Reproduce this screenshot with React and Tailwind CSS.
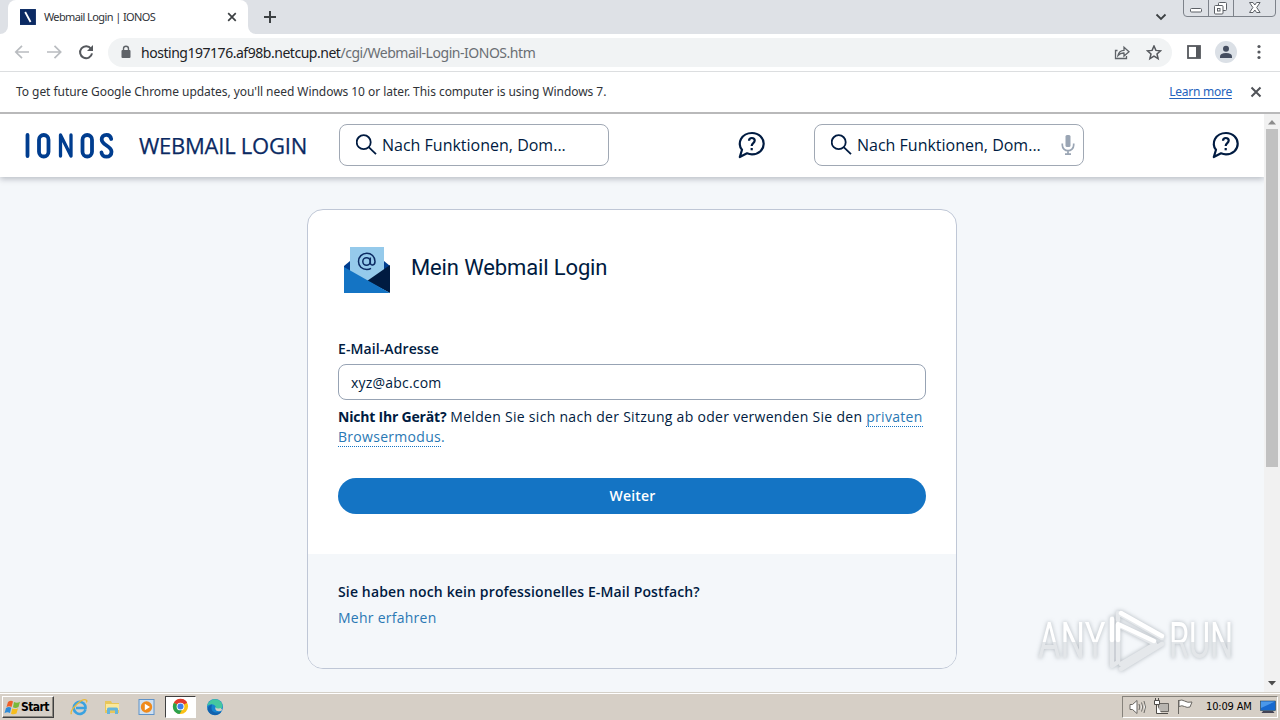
import React from 'react';

const ui = "font-['DejaVu_Sans_Condensed','DejaVu_Sans',sans-serif]";

function TabStrip() {
  return (
    <div className="relative flex h-[34px] shrink-0 bg-[#dee1e6]">
      <div className="flex w-2 items-end bg-white">
        <div className="h-full w-full rounded-br-lg bg-[#dee1e6]" />
      </div>
      <div className="flex w-[240px] items-center rounded-t-lg bg-white pl-3 pr-[10px]">
        <svg width="16" height="16" viewBox="0 0 16 16">
          <rect width="16" height="16" fill="#0b2a63" />
          <path d="M5.2 3L10.6 13" stroke="#fff" strokeWidth="1.8" />
        </svg>
        <span className="ml-[8px] w-[183px] whitespace-nowrap font-['Noto_Sans',sans-serif] text-[11px] leading-4 tracking-[-0.6px] text-[#303338]">Webmail Login | IONOS</span>
        <svg width="12" height="12" viewBox="0 0 12 12" stroke="#3c4043" strokeWidth="1.7"><path d="M2.2 2.2l7.6 7.6M9.8 2.2L2.2 9.8" /></svg>
      </div>
      <div className="w-2 bg-white"><div className="h-full rounded-bl-lg bg-[#dee1e6]" /></div>
      <svg className="ml-[7px] mt-[10px]" width="14" height="14" viewBox="0 0 14 14" stroke="#3c4043" strokeWidth="2"><path d="M7 1v12M1 7h12" /></svg>
      <svg className="ml-auto mr-[16px] mt-[12px]" width="12" height="10" viewBox="0 0 12 10" fill="none" stroke="#3c4043" strokeWidth="1.8"><path d="M1.500 2.500L6 7l4.500-4.500" /></svg>
      <svg className="mr-[4px]" width="93" height="17" viewBox="0 0 93 17" fill="none" stroke="#7d828a">
        <path d="M.5 0v13q0 3.500 3.500 3.500h85q3.500 0 3.500-3.500V0M25.500 0v16.500M50.500 0v16.500" />
        <g stroke="#5c6066" fill="#fff">
          <rect x="7.500" y="8.500" width="11" height="3.500" rx="1" />
          <rect x="35.500" y="2.500" width="8" height="8" rx="1" />
          <rect x="31.500" y="5.500" width="8.500" height="8.500" rx="1" />
          <rect x="34.500" y="8.500" width="2.500" height="2.500" />
          <path d="M66.500 2.500h3.500l1.800 2.500 1.800-2.500h3.500l-3.400 5 3.400 5h-3.500L71.800 10 70 12.500h-3.500l3.400-5z" />
        </g>
      </svg>
    </div>
  );
}

function Toolbar() {
  return (
    <div className="flex h-[38px] shrink-0 items-center border-b border-[#dcdee0] bg-white pl-[14px] pr-[14px]">
      <svg width="82" height="18" viewBox="0 0 82 18" fill="none" strokeWidth="1.700">
        <path d="M15 8H2M8 1.800L1.800 8 8 14.200M33 8h13.500M40.500 1.800L46.700 8l-6.200 6.200" stroke="#b9bcc0" />
        <path d="M77 4.800A6 6 0 1 0 78 9.300" stroke="#55585d" strokeWidth="2" />
        <path d="M79 1v6h-6z" fill="#55585d" />
      </svg>
      <div className="ml-3 flex h-[29px] w-[1064px] items-center rounded-full bg-[#f1f3f4] pl-3 pr-[10px]">
        <svg className="-mt-px" width="12" height="14" viewBox="0 0 12 14"><rect x="1.500" y="5" width="9" height="8" rx="1" fill="#5f6368" /><path d="M3.500 6V3.700a2.500 2.500 0 0 1 5 0V6" fill="none" stroke="#5f6368" strokeWidth="1.400" /></svg>
        <span className="ml-[9px] whitespace-nowrap font-['Noto_Sans',sans-serif] text-[14px] leading-5 tracking-[-0.47px] text-[#202124]">hosting197176.af98b.netcup.net<span className="text-[#6a6e73]">/cgi/Webmail-Login-IONOS.htm</span></span>
        <svg className="ml-auto" width="16" height="16" viewBox="0 0 16 16" fill="none" stroke="#5f6368" strokeWidth="1.300"><path d="M3.500 5.500h-2v8h11V11M4 10.500Q5 5.500 10 5.300V2.200l5 4.600-5 4.200V8Q6.500 7.800 4 10.500z" /></svg>
        <svg className="ml-4" width="16" height="16" viewBox="0 0 16 16" fill="none" stroke="#55585d" strokeWidth="1.500"><path d="M8 1l1.900 4.400 4.600.4L11 9l1.100 4.700L8 11.200l-4.100 2.500L5 9 1.500 5.800l4.600-.4z" /></svg>
      </div>
      <svg className="-mt-0.5 ml-[14px]" width="16" height="16" viewBox="0 0 16 16"><rect x="2" y="2" width="12" height="12" fill="none" stroke="#55585d" strokeWidth="1.800" /><path d="M10 2h4v12h-4z" fill="#55585d" /></svg>
      <svg className="-mt-0.5 ml-[13px]" width="22" height="22" viewBox="0 0 22 22"><circle cx="11" cy="11" r="11" fill="#dbe0e6" /><circle cx="11" cy="7.700" r="3" fill="#454e60" /><path d="M5 17v-1.500q0-3.500 6-3.500t6 3.500V17z" fill="#454e60" /></svg>
      <svg className="-mt-px ml-[20px]" width="4" height="16" fill="#55585d"><circle cx="2" cy="2.500" r="1.600" /><circle cx="2" cy="8" r="1.600" /><circle cx="2" cy="13.500" r="1.600" /></svg>
    </div>
  );
}

function UpdateBar() {
  return (
    <div className="flex h-[42px] shrink-0 items-center border-b-2 border-[#b9b9ba] bg-white pb-px pl-4 pr-[18px] font-['Noto_Sans',sans-serif] text-[12px] text-[#303338]">
      <span className="whitespace-nowrap tracking-[-0.05px]">To get future Google Chrome updates, you'll need Windows 10 or later. This computer is using Windows 7.</span>
      <a className="ml-auto tracking-[-0.25px] text-[#2463bd] underline underline-offset-2">Learn more</a>
      <svg className="ml-[18px]" width="12" height="12" viewBox="0 0 12 12" stroke="#505358" strokeWidth="2"><path d="M1.500 1.500l9 9M10.500 1.500l-9 9" /></svg>
    </div>
  );
}

function SearchField({ mic }) {
  return (
    <div className="flex h-[42px] w-[270px] items-center rounded-[8px] border border-[#a0a8b4] bg-white pl-4 pr-2">
      <svg width="22" height="22" viewBox="0 0 22 22" fill="none" stroke="#001b41" strokeWidth="1.800"><circle cx="7.700" cy="8.200" r="7" /><path d="M12.700 13.200l7.300 7" /></svg>
      <span className="ml-1 whitespace-nowrap text-[16px]">Nach Funktionen, Dom...</span>
      {mic && (
        <svg className="ml-auto" width="14" height="22" viewBox="0 0 14 22" fill="none" stroke="#9aa5b4" strokeWidth="1.700"><rect x="4.500" y="1" width="5" height="12" rx="1.500" fill="#9aa5b4" stroke="none" /><path d="M1.300 9.500v1.500a5.700 5.700 0 0 0 11.400 0V9.500M7 16.500V20M4 20.200h6" /></svg>
      )}
    </div>
  );
}

function HelpBubble() {
  return (
    <svg width="28" height="28" viewBox="0 0 28 28" fill="none" stroke="#001b41" strokeWidth="2.200">
      <path d="M1.800 26l2.200-7.200C1.300 16 1.200 11.200 3 8 5 4.500 9 2 14 2c7 0 11.700 5 11.700 10.800S21 23.300 14 23.300c-2 0-3.300-.3-5-1z" strokeLinejoin="round" />
      <path d="M11 9.700C11.100 7.800 12.300 7 13.800 7c1.700 0 2.900 1 2.900 2.600 0 2.600-3 2.400-3 5.400" />
      <path d="M13.700 17v2.300" />
    </svg>
  );
}

function SiteHeader() {
  return (
    <div className="relative z-10 flex h-[63px] shrink-0 items-center bg-white pb-px pl-[24px] text-[#001b41] shadow-[0_2px_6px_rgba(0,10,30,0.25)]">
      <svg className="mt-0.5" width="90" height="28" viewBox="0 0 90 28" fill="none" stroke="#003d8f" strokeWidth="3.800" strokeLinecap="round">
        <path d="M3.500 3v21" />
        <rect x="15" y="3" width="9.500" height="21.500" rx="4.750" />
        <path d="M36.500 24V3l10.500 21V3" strokeWidth="3.300" strokeLinejoin="round" />
        <rect x="58.500" y="3" width="9.500" height="21.500" rx="4.750" />
        <path d="M87.200 7c-.5-3-2.500-4.200-4.700-4.200-3 0-4.800 1.900-4.800 4.700 0 5.600 9.800 6.500 9.800 12.200 0 3-2 5-5 5-2.800 0-4.600-1.500-5-4.200" />
      </svg>
      <span className="ml-[25px] w-[200px] whitespace-nowrap text-[22px] tracking-[-0.24px] text-[#0b2a63] [-webkit-text-stroke:0.25px_#0b2a63]">WEBMAIL LOGIN</span>
      <SearchField />
      <div className="ml-[129px] mr-[48px]"><HelpBubble /></div>
      <SearchField mic />
      <div className="ml-[128px]"><HelpBubble /></div>
    </div>
  );
}

function LoginCard() {
  return (
    <div className="mx-auto mt-[32px] h-[460px] w-[650px] shrink-0 overflow-hidden rounded-[16px] border border-[#bfc7d6] bg-white text-[14px] leading-5 text-[#001b41]">
      <div className="h-[344px] px-[30px] pt-[36px]">
        <div className="flex h-[48px] items-center pl-[6px]">
          <svg width="46" height="46" viewBox="0 0 46 46">
            <path d="M0 19L6 14h34l6 5v10L23 36 0 25z" fill="#003d8f" />
            <path d="M6 0h34v26L23 35 6 25z" fill="#95caeb" />
            <path d="M46 18v28L23 34z" fill="#001b41" />
            <path d="M0 20l46 26H0z" fill="#1474c4" />
            <g fill="none" stroke="#0b2a63" strokeWidth="1.500"><circle cx="22.500" cy="14.500" r="3.700" /><path d="M26.300 10.500v5.200c0 3.400 4.700 3 4.700-1.200 0-5-3.700-8.200-8.200-8.200-4.800 0-8.300 3.500-8.300 8.200s3.500 8 8.300 8c1.700 0 3.100-.4 4.200-1.100" /></g>
          </svg>
          <h1 className="-mt-1 ml-[21px] whitespace-nowrap font-['Roboto',sans-serif] text-[22px] leading-7 tracking-[-0.13px]">Mein Webmail Login</h1>
        </div>
        <label className="mt-[45px] block font-semibold tracking-[0.1px]">E-Mail-Adresse</label>
        <div className="mt-[5px] flex h-[36px] items-center rounded-[8px] border border-[#97a3b4] px-3 pt-0.5 tracking-[0.2px]">xyz@abc.com</div>
        <p className="mt-[7px] whitespace-nowrap tracking-[0.29px]">
          <b className="font-bold tracking-[-0.2px]">Nicht Ihr Gerät?</b> Melden Sie sich nach der Sitzung ab oder verwenden Sie den <a className="border-b border-dotted border-[#1474c4] text-[#2a78b4]">privaten</a><br />
          <a className="border-b border-dotted border-[#1474c4] text-[#2a78b4]">Browsermodus</a><span className="text-[#2a78b4]">.</span>
        </p>
        <div className="mt-[31px] flex h-[36px] items-center justify-center rounded-full bg-[#1474c4] pl-px font-semibold tracking-[0.15px] text-white">Weiter</div>
      </div>
      <div className="h-[114px] bg-[#f4f7fa] px-[30px] pt-[28px]">
        <p className="whitespace-nowrap font-semibold tracking-[0.14px]">Sie haben noch kein professionelles E-Mail Postfach?</p>
        <a className="mt-[6px] block tracking-[0.25px] text-[#2a78b4]">Mehr erfahren</a>
      </div>
    </div>
  );
}

function ScrollBar() {
  return (
    <div className="flex w-4 shrink-0 flex-col items-center bg-[#f1f1f1]">
      <svg width="16" height="15" viewBox="0 0 16 15"><path d="M4 10.500l4-4.500 4 4.500z" fill="#8b8b8b" /></svg>
      <div className="h-[338px] w-3 bg-[#c1c1c1]" />
      <svg className="mt-auto" width="16" height="16" viewBox="0 0 16 16"><path d="M4 5l4 4.500L12 5z" fill="#4c4c4c" /></svg>
    </div>
  );
}

function Watermark() {
  return (
    <div className="absolute left-[1038px] top-[608px] z-20 flex h-[66px] w-[198px] items-center font-['Roboto',sans-serif] text-[50px] leading-none drop-shadow-[0_0_2px_rgba(110,120,130,0.5)]">
      <span className="w-[69px]"><span className="block w-max origin-left scale-x-[0.69] bg-linear-to-b from-white from-52% to-[#e3e6e9] to-52% bg-clip-text text-transparent">ANY</span></span>
      <svg width="62" height="66" viewBox="0 0 62 66" fill="none" stroke="#f4f6f8" strokeWidth="4.500" strokeLinejoin="round" strokeLinecap="round">
        <path d="M5 10v48l6-4V17l37 19M11 5l44 25M11 5v7M48 36L14 56M55 36L14 61" stroke="#e5e8eb" />
        <path d="M5 32V11M11 32V16l36 17M14 5l41 23" stroke="#fff" />
      </svg>
      <span className="w-[66px]"><span className="block w-max origin-left scale-x-[0.65] bg-linear-to-b from-white from-52% to-[#e3e6e9] to-52% bg-clip-text text-transparent">RUN</span></span>
    </div>
  );
}

function Taskbar() {
  return (
    <div className={`flex h-[28px] shrink-0 items-center border-t border-[#d4d0c8] bg-[#d6cfc6] shadow-[inset_0_1px_0_#fff] ${ui}`}>
      <div className="ml-[2px] mt-px flex h-[22px] w-[52px] items-center border border-b-[#404040] border-l-white border-r-[#404040] border-t-white pl-[1px] shadow-[inset_-1px_-1px_0_#8c8880]">
        <svg className="shrink-0" width="17" height="17" viewBox="0 0 17 17">
          <path d="M4 3q3-2 5-.5L7.500 8q-2.500-1.500-5 0z" fill="#ef5f28" /><path d="M10 3q3 1.500 6-.2L14.500 8q-3 1.700-5.500.3z" fill="#79b93b" /><path d="M2 9q3-1.800 5.200-.2L6 14q-3-1.500-5.500.3z" fill="#2e8bd8" /><path d="M8.300 9.400q3 1.400 5.700-.2l-1.500 5.300q-3 1.500-5.500.2z" fill="#f6bd1d" />
        </svg>
        <span className="text-[12px] font-bold tracking-[-0.55px] text-black">Start</span>
      </div>
      <svg className="ml-[16px]" width="18" height="18" viewBox="0 0 18 18" fill="none"><path d="M15.500 11.500A6 6 0 1 1 15.200 7.500q.4 1.500.3 2.500H6" stroke="#3aa2e0" strokeWidth="2.600" /><path d="M1.500 16.200C-1 13 12-1 16.500 2.200q.8.800-.2 2.300" stroke="#e9b93a" strokeWidth="1.300" /></svg>
      <svg className="ml-[16px]" width="17" height="18" viewBox="0 0 17 18"><path d="M1 3h6l1 2h7v10H1z" fill="#e8c65a" /><path d="M2 6h13v6H2z" fill="#fbe89a" /><path d="M3 16v-5q0-1.500 1.500-1.500h8q1.500 0 1.500 1.500v5h-3v-3.500H6V16z" fill="#65b5dc" /></svg>
      <svg className="ml-[17px]" width="17" height="18" viewBox="0 0 17 18"><rect x="1" y="1.500" width="15" height="15" fill="#cfe0f1" stroke="#5f93c9" /><circle cx="8.500" cy="9" r="5.700" fill="#ef8a1c" /><path d="M6.800 5.800v6.400L12 9z" fill="#fff" /></svg>
      <div className="ml-[10px] flex h-[22px] w-[31px] items-center justify-center border border-b-white border-l-[#404040] border-r-white border-t-[#404040] bg-white">
        <svg width="17" height="17" viewBox="0 0 18 18"><circle cx="9" cy="9" r="8" fill="#fbc116" /><path d="M9 9L2 5a8 8 0 0 1 14 0z" fill="#e33b2e" /><path d="M9 9L2 5a8 8 0 0 0 6 12l3.500-6z" fill="#2da14c" /><path d="M9 1a8 8 0 0 1 7 4H9z" fill="#e33b2e" /><circle cx="9" cy="9" r="4.100" fill="#fff" /><circle cx="9" cy="9" r="3.200" fill="#3f7fea" /></svg>
      </div>
      <svg className="ml-[10px]" width="18" height="18" viewBox="0 0 18 18"><circle cx="9" cy="9" r="8" fill="#1683d0" /><path d="M1.200 8C2.500 2 8 0 12.500 2c4 2 5.500 7.500 2 9.500-2 1-4.500.5-4.500-1 0-2-1-4-4-4.300Q3 6 1.200 8z" fill="#45c7a0" /><path d="M5.500 9C5 14 9.500 16 15.500 13.500 12 19 4 18 1.800 12.500 1 10 3 7 6 6.500z" fill="#1262ad" /><path d="M9.500 9q-1 2.200 1 3.800 3 1.200 6-.8l-2-2q-4 1.500-5-1z" fill="#d6cfc6" /></svg>
      <div className="ml-auto mr-[2px] flex h-[22px] w-[156px] items-center border border-b-white border-l-[#86827b] border-r-white border-t-[#86827b] pl-[6px]">
        <svg className="shrink-0" width="64" height="18" viewBox="0 0 64 18" fill="#fff" stroke="#6a6762" strokeWidth="1">
          <path d="M1 6.500h2.500L8 2.500v13l-4.500-4H1zM10 6q1.500 3 0 6M12.500 4.500q2.500 4.500 0 9M15 3q3 6 0 12" />
          <path d="M29.500 5.500h10v8h-10z" fill="#b8b5b0" /><path d="M25.500 2.500h5v4h-5zM26.500 0v2M29.500 0v2M27.500 6.500v9h5M31 15.500h8" stroke="#4f4c48" />
          <path d="M49.500 2v14M50 2.500q3-1.200 5.500.5 3 2 7.500 1l-2 5q-3 1-5.500-.5-2.500-1.500-5.500 0z" />
        </svg>
        <span className="ml-[13px] mt-0.5 w-[52px] shrink-0 whitespace-nowrap text-[11px] tracking-[-0.15px] text-black">10:09 AM</span>
        <svg className="ml-[2px] shrink-0" width="16" height="16" viewBox="0 0 16 16"><rect x=".5" y="2" width="15" height="9.500" fill="#1769cf" stroke="#245" strokeWidth=".6" /><path d="M1 2.500h14L1 9z" fill="#4a98ea" /><path d="M3 12h10l1.500 2h-13z" fill="#445" /></svg>
      </div>
    </div>
  );
}

export default function App() {
  return (
    <div className="relative flex h-[720px] w-[1280px] flex-col overflow-hidden">
      <TabStrip />
      <Toolbar />
      <UpdateBar />
      <div className="flex h-[578px] shrink-0">
        <div className="flex w-[1264px] flex-col overflow-hidden bg-[#f4f7fa] font-['Open_Sans',sans-serif]">
          <SiteHeader />
          <LoginCard />
        </div>
        <ScrollBar />
      </div>
      <Taskbar />
      <Watermark />
    </div>
  );
}
